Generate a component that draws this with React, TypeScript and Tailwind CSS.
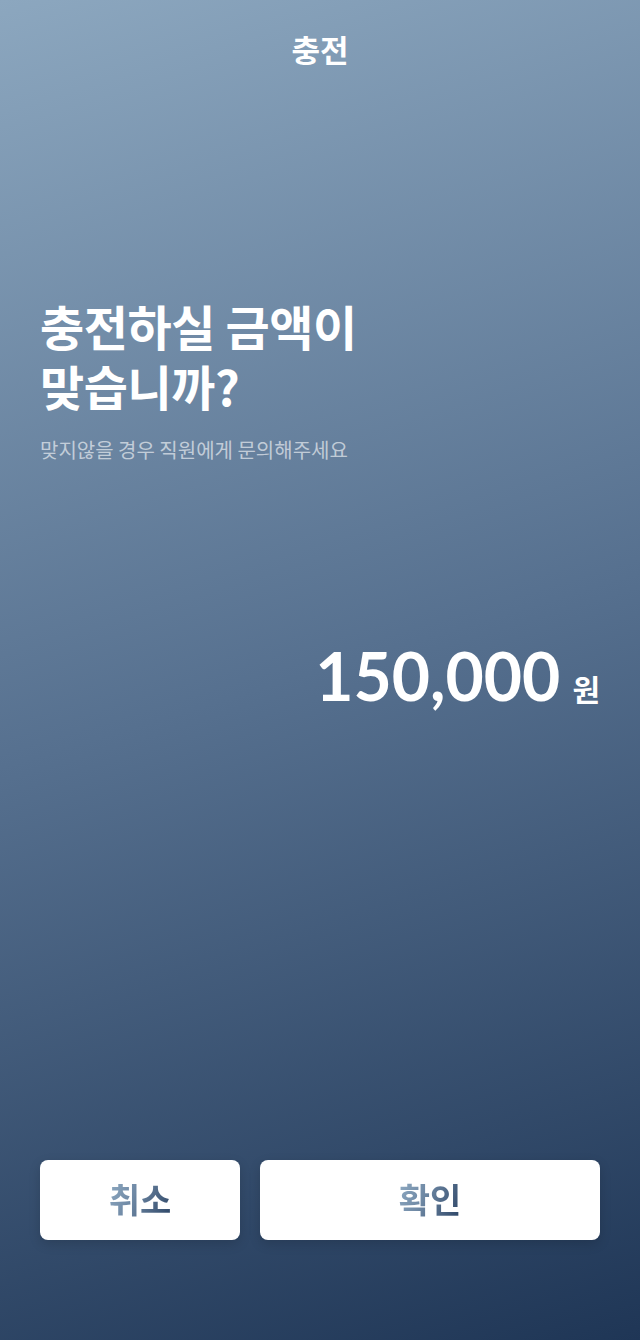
export default function App() {
  const kr = { fontFamily: '"Noto Sans CJK KR", "Noto Sans", sans-serif' };
  const gradText =
    "bg-[linear-gradient(115deg,#90abc3_0%,#6f89a5_40%,#2a4263_100%)] bg-clip-text text-transparent";
  return (
    <div
      className="w-[640px] h-[1340px] flex flex-col bg-[linear-gradient(163deg,#8ca7bf_0%,#56708f_50%,#1f3656_100%)] text-white"
      style={kr}
    >
      <div className="pt-[28px] flex justify-center">
        <h1 className="text-[31px] leading-[42px] font-bold">충전</h1>
      </div>
      <div className="px-10 mt-[225px]">
        <h2 className="text-[48px] leading-[60px] font-bold tracking-[-0.4px]">
          충전하실 금액이
          <br />
          맞습니까?
        </h2>
        <p className="mt-[21px] text-[20px] leading-[28px] text-white/60">
          맞지않을 경우 직원에게 문의해주세요
        </p>
      </div>
      <div className="px-10 mt-[172px] flex justify-end items-baseline gap-[12px]">
        <span
          className="text-[66px] leading-[80px] font-bold"
          style={{ fontFamily: 'Lato, "Noto Sans", sans-serif' }}
        >
          150,000
        </span>
        <span className="text-[30px] font-bold leading-[40px]">원</span>
      </div>
      <div className="flex-1" />
      <div className="px-10 pb-[100px] flex gap-5">
        <button className="w-[200px] h-[80px] rounded-lg bg-white shadow-[0_4px_12px_rgba(0,0,0,0.15)] flex items-center justify-center">
          <span className={`text-[34px] font-bold leading-[44px] -mt-[2px] ${gradText}`}>취소</span>
        </button>
        <button className="flex-1 h-[80px] rounded-lg bg-white shadow-[0_4px_12px_rgba(0,0,0,0.15)] flex items-center justify-center">
          <span className={`text-[34px] font-bold leading-[44px] -mt-[2px] ${gradText}`}>확인</span>
        </button>
      </div>
    </div>
  );
}
